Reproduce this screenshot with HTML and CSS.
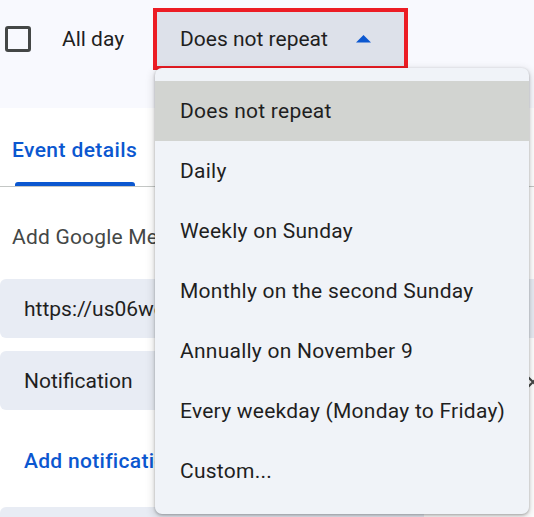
FILE: index.html
```html
<!DOCTYPE html>
<html lang="en">
<head>
<meta charset="utf-8">
<title>Event - repeat menu</title>
<link rel="stylesheet" href="styles.css">
</head>
<body>
<div class="page">
  <div class="topbar">
    <span class="checkbox"></span>
    <span class="allday">All day</span>
    <div class="repeat">
      <span>Does not repeat</span>
      <svg class="arrow" width="15" height="8" viewBox="0 0 15 8"><path d="M0 7.5 L7.5 0 L15 7.5 Z" fill="#0b57d0"/></svg>
    </div>
  </div>
  <div class="content">
    <div class="tabs">
      <div class="tab active">
        <span class="tab-label">Event details</span>
        <span class="tab-bar"></span>
      </div>
    </div>
    <div class="meet">Add Google Meet video conferencing</div>
    <div class="field link">https://us06web.zoom.us/j/84512345678?pwd=bXk</div>
    <div class="notif-row">
      <div class="field notif">Notification</div>
      <svg class="close" width="14" height="14" viewBox="0 0 14 14"><path d="M1 1 L13 13 M13 1 L1 13" stroke="#444746" stroke-width="2" fill="none"/></svg>
    </div>
    <div class="add-notif">Add notification</div>
    <div class="field bottom"></div>
  </div>
  <ul class="menu">
    <li class="item selected">Does not repeat</li>
    <li class="item">Daily</li>
    <li class="item">Weekly on Sunday</li>
    <li class="item">Monthly on the second Sunday</li>
    <li class="item">Annually on November 9</li>
    <li class="item">Every weekday (Monday to Friday)</li>
    <li class="item">Custom...</li>
  </ul>
</div>
</body>
</html>
```

FILE: styles.css
```css
html, body {
  margin: 0;
  padding: 0;
  overflow: hidden;
  background: #ffffff;
}
body {
  font-family: Roboto, "Liberation Sans", sans-serif;
  font-size: 21px;
  color: #1f1f1f;
}
.page {
  position: relative;
  width: 534px;
  height: 517px;
  overflow: hidden;
}
.topbar {
  height: 108px;
  box-sizing: border-box;
  padding-top: 8px;
  background: #f8f9fe;
  display: flex;
  align-items: flex-start;
}
.checkbox {
  flex: 0 0 auto;
  width: 26px;
  height: 26px;
  box-sizing: border-box;
  border: 3px solid #444746;
  border-radius: 3px;
  margin: 18px 0 0 5px;
}
.allday {
  flex: 0 0 auto;
  width: 91px;
  margin-left: 31px;
  line-height: 62px;
  white-space: nowrap;
}
.repeat {
  flex: 0 0 auto;
  width: 255px;
  height: 62px;
  box-sizing: border-box;
  border: 4px solid #ec1c24;
  background: #dde1ea;
  display: flex;
  align-items: center;
  padding-left: 23px;
  white-space: nowrap;
}
.arrow {
  margin-left: 28px;
  margin-top: -1px;
}
.content {
  width: 700px;
}
.tabs {
  border-bottom: 1px solid #c4c7c5;
  display: flex;
}
.tab {
  display: flex;
  flex-direction: column;
  padding-left: 12px;
  padding-top: 28px;
}
.tab-label {
  line-height: 28px;
  color: #0b57d0;
  font-weight: 500;
  letter-spacing: 0.4px;
}
.tab-bar {
  margin-top: 18px;
  margin-left: 3px;
  width: 120px;
  height: 4px;
  background: #0b57d0;
  border-radius: 3px 3px 0 0;
}
.meet {
  margin-top: 36px;
  padding-left: 12px;
  line-height: 28px;
  color: #444746;
  white-space: nowrap;
  letter-spacing: 0.2px;
}
.field {
  background: #e8ecf4;
  border-radius: 6px;
  height: 59px;
  box-sizing: border-box;
  display: flex;
  align-items: center;
  padding-left: 24px;
  white-space: nowrap;
}
.field.link {
  margin-top: 28px;
  width: 640px;
}
.notif-row {
  margin-top: 13px;
  display: flex;
  align-items: center;
}
.field.notif {
  width: 490px;
}
.close {
  margin-left: 36px;
  margin-top: 2px;
}
.add-notif {
  margin-top: 37px;
  padding-left: 24px;
  line-height: 28px;
  color: #0b57d0;
  font-weight: 500;
  letter-spacing: 0.3px;
}
.field.bottom {
  margin-top: 32px;
  width: 424px;
  height: 60px;
}
.menu {
  position: absolute;
  left: 155px;
  top: 68px;
  width: 374px;
  margin: 0;
  padding: 13px 0;
  list-style: none;
  background: #f0f3f8;
  border-radius: 7px;
  box-shadow: 0 1px 3px rgba(0, 0, 0, 0.3), 0 3px 8px 2px rgba(0, 0, 0, 0.12);
}
.item {
  height: 60px;
  display: flex;
  align-items: center;
  padding-left: 25px;
  white-space: nowrap;
  letter-spacing: 0.25px;
}
.item.selected {
  background: #d2d4d1;
}
```
